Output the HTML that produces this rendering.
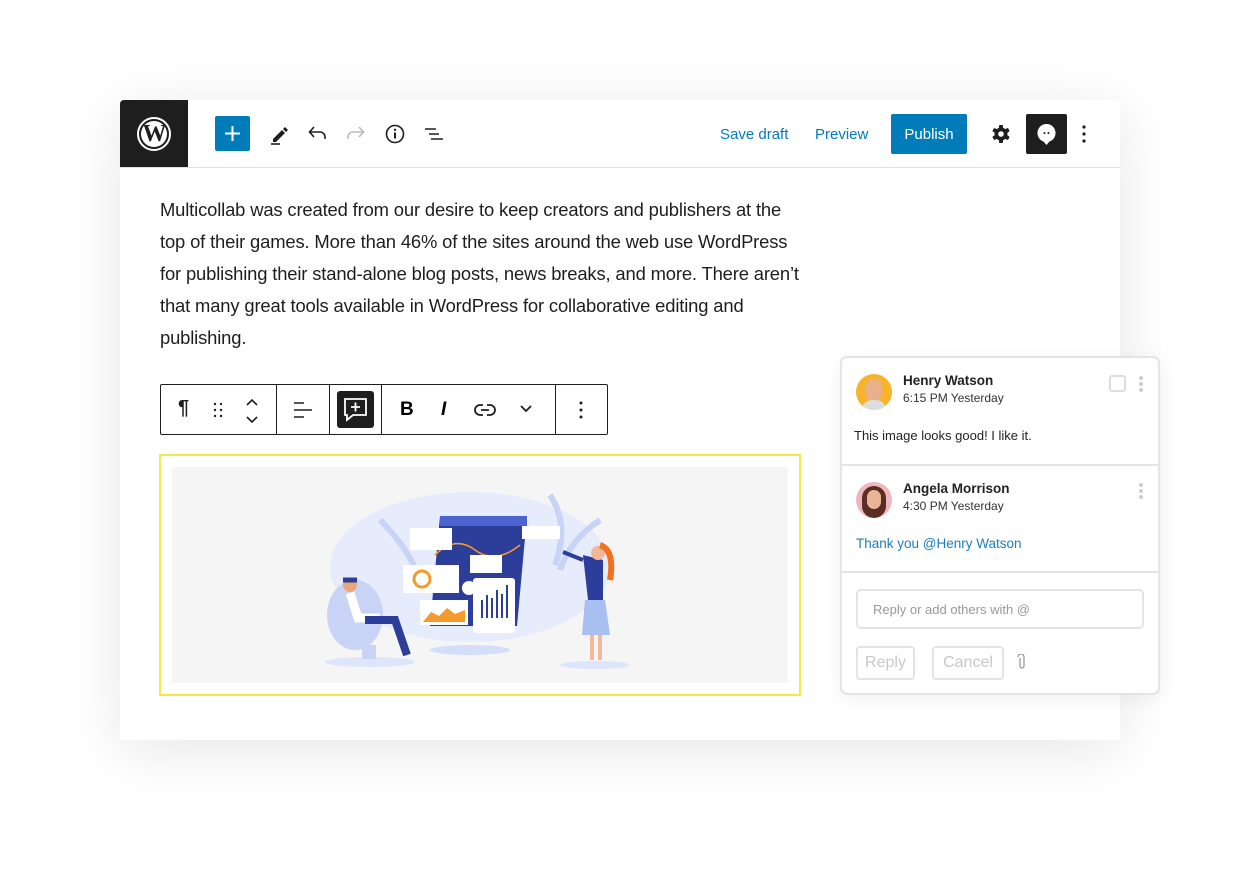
<!DOCTYPE html>
<html><head><meta charset="utf-8"><style>
*{margin:0;padding:0;box-sizing:border-box}
body{width:1240px;height:880px;background:#fff;font-family:"Liberation Sans",sans-serif;position:relative;overflow:hidden}
.card{position:absolute;left:120px;top:100px;width:1000px;height:640px;background:#fff;border-radius:4px;box-shadow:0 10px 60px rgba(0,0,0,0.10)}
.hdr{position:absolute;left:0;top:0;width:1000px;height:68px;border-bottom:1px solid #e0e0e0}
.logo{position:absolute;left:0;top:0;width:68px;height:67px;background:#1e1e1e;border-top-left-radius:4px}
.abs{position:absolute}
.txt{position:absolute;left:160px;top:194px;font-size:18.4px;line-height:32px;color:#1e1e1e;white-space:nowrap;letter-spacing:-0.15px}
.tb{position:absolute;left:160px;top:384px;width:448px;height:51px;border:1px solid #1e1e1e;border-radius:2px;background:#fff}
.sep{position:absolute;top:0;width:1px;height:49px;background:#1e1e1e}
.cp{position:absolute;left:840px;top:356px;width:320px;height:339px;background:#fff;border:2px solid #e2e4e7;border-radius:7px;box-shadow:0 4px 20px rgba(0,0,0,0.06)}
.name{font-size:13.5px;font-weight:bold;color:#222}
.time{font-size:12px;color:#333}
.btn{position:absolute;border:2px solid #e2e4e7;border-radius:4px;color:#c8c8c8;font-size:16px;text-align:center}
</style></head><body>
<div class="card">
 <div class="hdr">
  <div class="logo">
   <div class="abs" style="left:17px;top:17px;width:34px;height:34px;border-radius:50%;border:2px solid #fff"></div>
   <div class="abs" style="left:21px;top:21px;width:26px;height:26px;border-radius:50%;background:#fff;color:#1e1e1e;font-family:'Liberation Serif',serif;font-weight:bold;font-size:24px;line-height:27px;text-align:center;letter-spacing:-1px">W</div>
  </div>
  <div class="abs" style="left:95px;top:16px;width:35px;height:35px;background:#007cba;border-radius:2px"><svg width="35" height="35"><path d="M17.5 10v15M10 17.5h15" stroke="#fff" stroke-width="2"/></svg></div>
  <svg class="abs" style="left:148px;top:22px" width="24" height="24"><path d="M5 17l9-9 3 3-9 9H5z M15 7l2-2 3 3-2 2" fill="#1e1e1e"/><path d="M3 22h9" stroke="#1e1e1e" stroke-width="1.6"/></svg>
  <svg class="abs" style="left:186px;top:22px" width="24" height="24"><path d="M4 10h10a5 5 0 0 1 5 5v2" fill="none" stroke="#1e1e1e" stroke-width="1.6"/><path d="M8 5L3.5 10 8 15" fill="none" stroke="#1e1e1e" stroke-width="1.6"/></svg>
  <svg class="abs" style="left:223px;top:22px" width="24" height="24"><path d="M20 10H10a5 5 0 0 0-5 5v2" fill="none" stroke="#bbb" stroke-width="1.6"/><path d="M16 5l4.5 5L16 15" fill="none" stroke="#bbb" stroke-width="1.6"/></svg>
  <svg class="abs" style="left:263px;top:22px" width="24" height="24"><circle cx="12" cy="12" r="8.5" fill="none" stroke="#1e1e1e" stroke-width="1.6"/><path d="M12 10.5v6" stroke="#1e1e1e" stroke-width="2"/><circle cx="12" cy="7.8" r="1.2" fill="#1e1e1e"/></svg>
  <svg class="abs" style="left:302px;top:22px" width="24" height="24"><path d="M3 7h11M7 12h10M9 17h12" stroke="#1e1e1e" stroke-width="1.6"/></svg>
  <div class="abs" style="left:600px;top:26px;font-size:15px;color:#007cba">Save draft</div>
  <div class="abs" style="left:695px;top:26px;font-size:15px;color:#007cba">Preview</div>
  <div class="abs" style="left:771px;top:14px;width:76px;height:40px;background:#007cba;border-radius:2px;color:#fff;font-size:15px;text-align:center;line-height:42px">Publish</div>
  <svg class="abs" style="left:870px;top:23px" width="22" height="22" viewBox="0 0 22 22"><g fill="#1e1e1e"><circle cx="11" cy="11" r="6.5"/><rect x="9" y="2" width="4" height="18" rx="1"/><rect x="9" y="2" width="4" height="18" rx="1" transform="rotate(60 11 11)"/><rect x="9" y="2" width="4" height="18" rx="1" transform="rotate(120 11 11)"/></g><circle cx="11" cy="11" r="2.8" fill="#fff"/></svg>
  <div class="abs" style="left:906px;top:14px;width:41px;height:40px;background:#1e1e1e;border-radius:2px"><svg width="41" height="40"><path d="M20.5 10a9 9 0 0 1 3 17.5l-3 3.5-3-3.5a9 9 0 0 1 3-17.5z" fill="#fff"/><circle cx="18.5" cy="19" r="1" fill="#1e1e1e"/><circle cx="22.5" cy="19" r="1" fill="#1e1e1e"/></svg></div>
  <svg class="abs" style="left:958px;top:22px" width="12" height="24"><circle cx="6" cy="5" r="1.6" fill="#1e1e1e"/><circle cx="6" cy="12" r="1.6" fill="#1e1e1e"/><circle cx="6" cy="19" r="1.6" fill="#1e1e1e"/></svg>
 </div>
</div>
<div class="txt">Multicollab was created from our desire to keep creators and publishers at the<br>top of their games. More than 46% of the sites around the web use WordPress<br>for publishing their stand-alone blog posts, news breaks, and more. There aren’t<br>that many great tools available in WordPress for collaborative editing and<br>publishing.</div>
<div class="tb">
 <div class="sep" style="left:115px"></div><div class="sep" style="left:168px"></div><div class="sep" style="left:220px"></div><div class="sep" style="left:394px"></div>
 <div class="abs" style="left:17px;top:12px;font-size:20px;font-weight:bold;color:#1e1e1e">¶</div>
 <svg class="abs" style="left:50px;top:16px" width="14" height="18"><g fill="#1e1e1e"><circle cx="4" cy="3" r="1.2"/><circle cx="10" cy="3" r="1.2"/><circle cx="4" cy="9" r="1.2"/><circle cx="10" cy="9" r="1.2"/><circle cx="4" cy="15" r="1.2"/><circle cx="10" cy="15" r="1.2"/></g></svg>
 <svg class="abs" style="left:82px;top:12px" width="18" height="28"><path d="M4 8l5-5 5 5M4 20l5 5 5-5" fill="none" stroke="#1e1e1e" stroke-width="1.6"/></svg>
 <svg class="abs" style="left:130px;top:13px" width="24" height="24"><path d="M3 5h10M3 12h18M3 19h10" stroke="#1e1e1e" stroke-width="1.6"/></svg>
 <div class="abs" style="left:176px;top:6px;width:37px;height:37px;background:#1e1e1e;border-radius:3px"><svg width="37" height="37"><path d="M8 8h21v16H16l-6 5v-5H8z" fill="none" stroke="#fff" stroke-width="1.8"/><path d="M18.5 11.5v9M14 16h9" stroke="#fff" stroke-width="1.8"/></svg></div>
 <div class="abs" style="left:239px;top:14px;font-size:19px;font-weight:bold">B</div>
 <div class="abs" style="left:280px;top:14px;font-size:19px;font-style:italic;font-weight:bold">I</div>
 <svg class="abs" style="left:312px;top:14px" width="24" height="22"><path d="M10 6H7a5 5 0 0 0 0 10h3M14 6h3a5 5 0 0 1 0 10h-3M8 11h8" fill="none" stroke="#1e1e1e" stroke-width="1.8"/></svg>
 <svg class="abs" style="left:358px;top:18px" width="14" height="12"><path d="M2 3l5 5 5-5" fill="none" stroke="#1e1e1e" stroke-width="1.8"/></svg>
 <svg class="abs" style="left:414px;top:13px" width="12" height="24"><circle cx="6" cy="5" r="1.5" fill="#1e1e1e"/><circle cx="6" cy="12" r="1.5" fill="#1e1e1e"/><circle cx="6" cy="19" r="1.5" fill="#1e1e1e"/></svg>
</div>
<div class="abs" style="left:159px;top:454px;width:642px;height:242px;border:2px solid #f0e94a"></div>
<div class="abs" style="left:172px;top:467px;width:616px;height:216px;background:#f5f5f5">
 <svg width="616" height="216" viewBox="172 467 616 216">
  <ellipse cx="470" cy="567" rx="140" ry="75" fill="#e6ecfb"/>
  <path d="M380 520q30 30 40 60M550 495q20 30 5 70M600 520q-30 20-40 50" stroke="#c8d4f5" stroke-width="6" fill="none"/>
  <ellipse cx="470" cy="650" rx="40" ry="5" fill="#d4def8"/>
  <ellipse cx="370" cy="662" rx="45" ry="5" fill="#dde5fa"/>
  <ellipse cx="595" cy="665" rx="35" ry="4" fill="#dde5fa"/>
  <path d="M440 516h87l-10 110h-87z" fill="#2d3e9a"/>
  <rect x="440" y="516" width="87" height="10" fill="#4d64d0"/>
  <path d="M435 555q20 -20 40 -5t45 -5" stroke="#f39c2b" stroke-width="1.5" fill="none"/>
  <rect x="410" y="528" width="42" height="22" fill="#fff"/>
  <rect x="403" y="565" width="56" height="28" fill="#fff"/>
  <circle cx="422" cy="579" r="8" fill="none" stroke="#f39c2b" stroke-width="3"/>
  <rect x="470" y="555" width="32" height="18" fill="#fff"/>
  <rect x="522" y="526" width="38" height="13" fill="#fff"/>
  <rect x="420" y="600" width="48" height="25" fill="#fff"/>
  <path d="M423 622l8-10 8 4 8-8 8 6 10-4v12z" fill="#f39c2b"/>
  <rect x="473" y="578" width="42" height="55" rx="3" fill="#fff"/>
  <path d="M482 600v18M487 595v23M492 598v20M497 590v28M502 594v24M507 585v33" stroke="#2d3e9a" stroke-width="2"/>
  <circle cx="469" cy="588" r="7" fill="#fff"/>
  <ellipse cx="355" cy="615" rx="28" ry="35" fill="#c9d3f5"/>
  <rect x="362" y="645" width="14" height="14" fill="#c9d3f5"/>
  <circle cx="350" cy="585" r="7" fill="#e9a67a"/>
  <path d="M343 580h14" stroke="#2d3e9a" stroke-width="5"/>
  <path d="M350 593l8 25h22" stroke="#fff" stroke-width="9" fill="none"/>
  <path d="M365 620l30 0 12 35" stroke="#2d3e9a" stroke-width="8" fill="none"/>
  <path d="M583 555l20 5v40h-15z" fill="#2d3e9a"/>
  <path d="M585 600h20l5 35h-28z" fill="#a9bff0"/>
  <circle cx="598" cy="553" r="7" fill="#f3b898"/>
  <path d="M600 545q15 5 10 35" stroke="#f36f21" stroke-width="6" fill="none"/>
  <path d="M583 560l-20-8" stroke="#2d3e9a" stroke-width="4"/>
  <path d="M592 635v25M600 635v25" stroke="#f3b898" stroke-width="4"/>
 </svg>
</div>
<div class="cp">
 <div class="abs" style="left:14px;top:16px;width:36px;height:36px;border-radius:50%;background:#f6b32b;overflow:hidden"><div style="position:absolute;left:10px;top:5px;width:16px;height:22px;border-radius:8px;background:#e8b08d"></div><div style="position:absolute;left:6px;top:26px;width:24px;height:14px;border-radius:10px 10px 0 0;background:#ddd"></div></div>
 <div class="abs name" style="left:61px;top:15px">Henry Watson</div>
 <div class="abs time" style="left:61px;top:33px">6:15 PM Yesterday</div>
 <div class="abs" style="left:267px;top:17px;width:17px;height:17px;border:2px solid #ddd;border-radius:3px"></div>
 <svg class="abs" style="left:296px;top:17px" width="6" height="20"><circle cx="3" cy="3" r="2" fill="#ccc"/><circle cx="3" cy="9" r="2" fill="#ccc"/><circle cx="3" cy="15" r="2" fill="#ccc"/></svg>
 <div class="abs" style="left:12px;top:70px;font-size:13px;color:#222">This image looks good! I like it.</div>
 <div class="abs" style="left:0;top:106px;width:316px;height:2px;background:#e2e4e7"></div>
 <div class="abs" style="left:14px;top:124px;width:36px;height:36px;border-radius:50%;background:#f0b6be;overflow:hidden"><div style="position:absolute;left:6px;top:4px;width:24px;height:32px;border-radius:12px;background:#5a2e22"></div><div style="position:absolute;left:11px;top:8px;width:14px;height:19px;border-radius:7px;background:#e9b597"></div></div>
 <div class="abs name" style="left:61px;top:123px">Angela Morrison</div>
 <div class="abs time" style="left:61px;top:141px">4:30 PM Yesterday</div>
 <svg class="abs" style="left:296px;top:124px" width="6" height="20"><circle cx="3" cy="3" r="2" fill="#ccc"/><circle cx="3" cy="9" r="2" fill="#ccc"/><circle cx="3" cy="15" r="2" fill="#ccc"/></svg>
 <div class="abs" style="left:14px;top:178px;font-size:13.5px;color:#1a7ec0">Thank you @Henry Watson</div>
 <div class="abs" style="left:0;top:213px;width:316px;height:2px;background:#e2e4e7"></div>
 <div class="abs" style="left:14px;top:231px;width:288px;height:40px;border:2px solid #e2e4e7;border-radius:5px;font-size:13px;color:#999;padding:11px 0 0 15px">Reply or add others with @</div>
 <div class="btn" style="left:14px;top:288px;width:59px;height:34px;line-height:30px">Reply</div>
 <div class="btn" style="left:90px;top:288px;width:72px;height:34px;line-height:30px">Cancel</div>
 <svg class="abs" style="left:175px;top:296px" width="10" height="16"><path d="M3 4v8a2 2 0 0 0 4 0V3a3 3 0 0 0-6 0" fill="none" stroke="#999" stroke-width="1.3"/></svg>
</div>
</body></html>
